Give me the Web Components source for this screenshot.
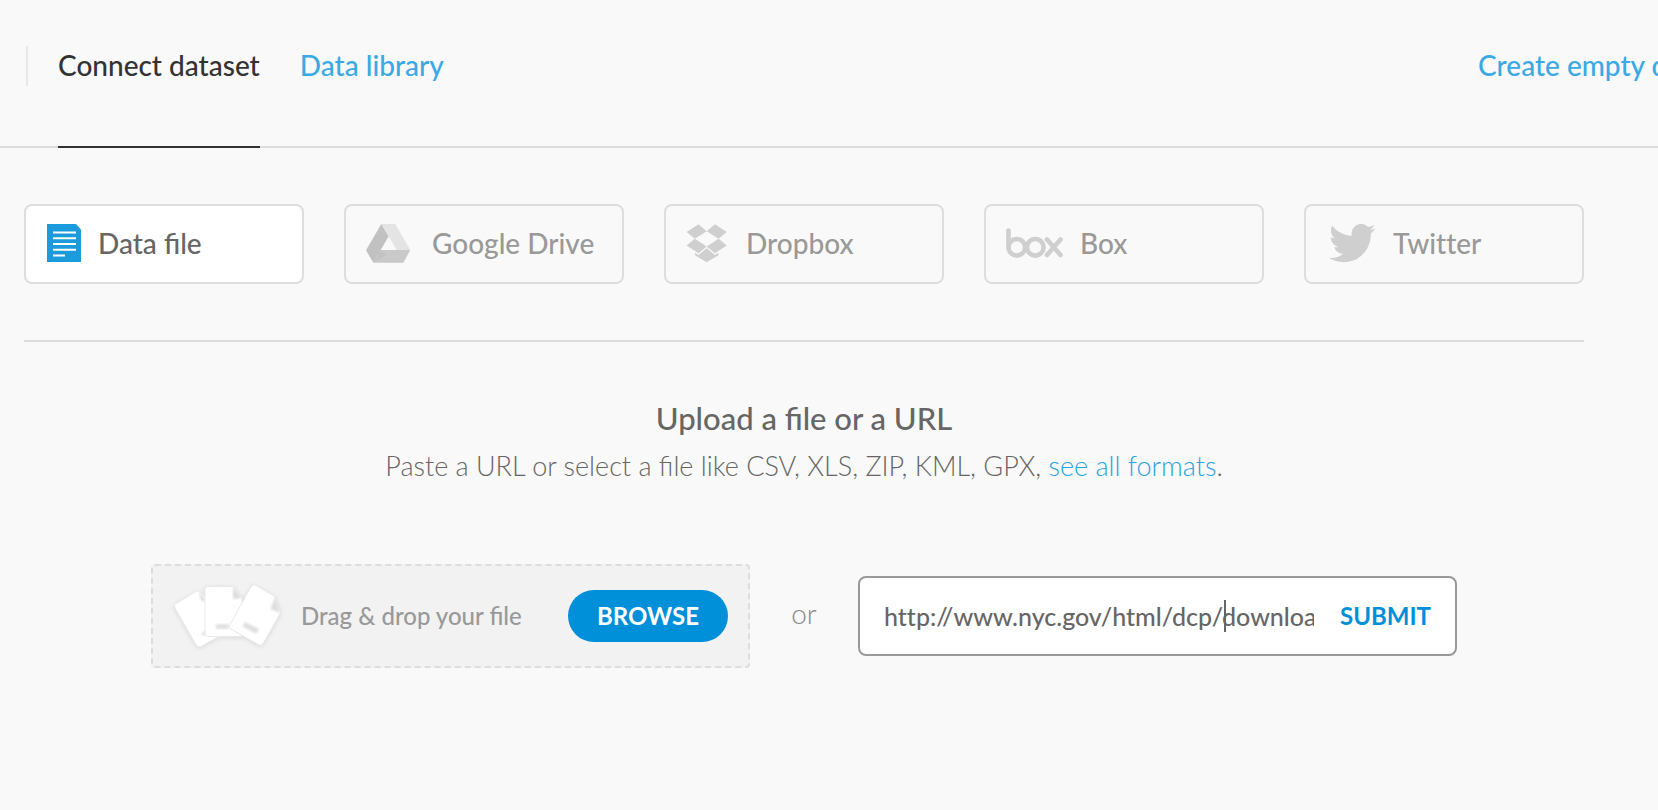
<!DOCTYPE html>
<html lang="en">
<head>
<meta charset="utf-8">
<title>Connect dataset</title>
<style>
  body { margin: 0; background: #f9f9f9; color: #666; font: 400 28px/40px Lato, "Liberation Sans", sans-serif; overflow-x: hidden; -webkit-font-smoothing: antialiased; }
</style>
</head>
<body>
<connect-page></connect-page>

<template id="connect-page">
  <style>
    :host { display: block; }
    main { padding: 56px 74px 56px 24px; }
    .sources { display: grid; grid-template-columns: repeat(5, 1fr); gap: 40px; padding-bottom: 56px; border-bottom: 2px solid #ddd; }
    h1 { margin: 56px 0 8px; font-size: 31px; line-height: 40px; font-weight: 500; text-align: center; }
    p { margin: 0; font-size: 27px; font-weight: 300; text-align: center; }
    p a { color: #2ba2e2; text-decoration: none; }
    .upload { display: flex; align-items: center; max-width: 1306px; margin: 78px auto 0; }
    file-drop, url-field { flex: 1 1 0; min-width: 0; }
    .or { flex: none; width: 108px; padding-bottom: 6px; text-align: center; font-weight: 300; color: #888; }
  </style>
  <page-header></page-header>
  <main>
    <div class="sources">
      <source-card selected>
        <svg slot="icon" width="35" height="40" viewBox="0 0 35 40"><path fill="#1b9bdb" d="M1 0H30L35 5.500V38H1z"/><path stroke="#fff" stroke-width="2" d="M7 8.500H30M7 14.300H30M7 20H30M7 25.800H30M7 31.500H19"/></svg>
        Data file
      </source-card>
      <source-card>
        <svg slot="icon" width="49" height="40" viewBox="0 0 49 40"><path fill="#c1c1c1" d="M15.300 0L22.700 12.300 7.300 38.800 0 26.300z"/><path fill="#e4e4e4" d="M15.300 0H29.300L44.300 26H30.700z"/><path fill="#c9c9c9" d="M14.700 26H44.300L37.300 38.800H7.300z"/><path fill="#bbb" d="M14.700 26L20 31 7.300 38.800z" opacity=".5"/></svg>
        Google Drive
      </source-card>
      <source-card>
        <svg slot="icon" width="43" height="40" viewBox="0 0 43 40"><path fill="#cfcfcf" d="M12.500 .2L20.700 7.300 8.800 14.700 .6 8zM28.900 .2L20.700 7.300 32.600 14.700 40.800 8zM8.800 14.700L20.700 22.500 12.500 29.200 .6 21.400zM32.600 14.700L20.700 22.500 28.900 29.200 40.800 21.400zM20.700 24.300L12.500 31 9 28.800V31.300L20.700 38.300 32.500 31.300V28.800L28.900 31z"/></svg>
        Dropbox
      </source-card>
      <source-card>
        <svg slot="icon" width="57" height="40" viewBox="0 0 57 40"><g fill="none" stroke="#cfcfcf" stroke-width="4.600" stroke-linecap="round"><path d="M2.500 6.500V23"/><circle cx="10.800" cy="23.300" r="8.300"/><circle cx="29.300" cy="23.300" r="8.300"/><path d="M41 15.500L54.500 31M54.500 15.500L41 31"/></g></svg>
        Box
      </source-card>
      <source-card>
        <svg slot="icon" width="50" height="40" viewBox="0 0 50 40"><path fill="#cfcfcf" transform="translate(3 -4.500) scale(1.940 1.960)" d="M23.953 4.570a10 10 0 01-2.825.775 4.958 4.958 0 002.163-2.723c-.951.555-2.005.959-3.127 1.184a4.920 4.920 0 00-8.384 4.482C7.690 8.095 4.067 6.130 1.640 3.162a4.822 4.822 0 00-.666 2.475c0 1.710.870 3.213 2.188 4.096a4.904 4.904 0 01-2.228-.616v.060a4.923 4.923 0 003.946 4.827 4.996 4.996 0 01-2.212.085 4.936 4.936 0 004.604 3.417 9.867 9.867 0 01-6.102 2.105c-.390 0-.779-.023-1.170-.067a13.995 13.995 0 007.557 2.209c9.053 0 13.998-7.496 13.998-13.985 0-.210 0-.420-.015-.630A9.935 9.935 0 0024 4.590z"/></svg>
        Twitter
      </source-card>
    </div>
    <h1>Upload a file or a URL</h1>
    <p>Paste a URL or select a file like CSV, XLS, ZIP, KML, GPX, <a href="#formats">see all formats</a>.</p>
    <div class="upload">
      <file-drop>Drag &amp; drop your file</file-drop>
      <span class="or">or</span>
      <url-field></url-field>
    </div>
  </main>
</template>

<template id="page-header">
  <style>
    :host { display: block; box-shadow: inset 0 -2px #ddd; }
    header { display: flex; padding-left: 26px; }
    nav { display: flex; flex: 1; gap: 40px; }
    .divider { width: 2px; height: 40px; margin: 46px 30px 0 0; background: #e8e8e8; }
    .create { flex: none; width: 180px; overflow: hidden; padding-top: 45px; color: #3aa9e4; font-weight: 500; text-decoration: none; white-space: nowrap; }
  </style>
  <header>
    <div class="divider"></div>
    <nav>
      <nav-tab href="#connect" current>Connect dataset</nav-tab>
      <nav-tab href="#library">Data library</nav-tab>
    </nav>
    <a class="create" href="#new">Create empty dataset</a>
  </header>
</template>

<template id="nav-tab">
  <style>
    :host { display: block; }
    a { display: block; padding: 45px 0 61px; border-bottom: 2px solid transparent; color: #3aa9e4; font-weight: 500; text-decoration: none; white-space: nowrap; }
    :host([current]) a { color: #333; border-color: #333; }
  </style>
  <a><slot></slot></a>
</template>

<template id="source-card">
  <style>
    :host { display: block; min-width: 0; }
    button { display: flex; align-items: center; gap: 17px; box-sizing: border-box; width: 100%; height: 80px; margin: 0; padding: 0 20px; border: 2px solid #ddd; border-radius: 8px; background: none; color: #999; font: inherit; font-weight: 500; white-space: nowrap; }
    :host([selected]) button { background: #fff; color: #666; }
    :host(:not([selected])) button { font-variant-ligatures: none; }
    .label { padding-bottom: 2px; }
    ::slotted(svg) { flex: none; }
  </style>
  <button type="button"><slot name="icon"></slot><span class="label"><slot></slot></span></button>
</template>

<template id="file-drop">
  <style>
    :host { display: block; }
    .zone { display: flex; align-items: center; gap: 16px; box-sizing: border-box; height: 104px; padding: 0 20px; border: 2px dashed #ddd; border-radius: 4px; background: #f2f2f2; color: #999; font-size: 24px; font-weight: 500; }
    svg { flex: none; filter: drop-shadow(0 1px 2px rgba(0, 0, 0, .1)); }
    .text { flex: 1; white-space: nowrap; }
    button { flex: none; width: 160px; height: 52px; padding: 0; border: 0; border-radius: 26px; background: #0090da; color: #fff; font: inherit; font-weight: 700; }
  </style>
  <div class="zone">
    <svg width="112" height="72" viewBox="0 0 112 72" aria-hidden="true">
      <defs><filter id="soft"><feGaussianBlur stdDeviation=".8"/></filter></defs>
      <g fill="#fff" stroke="#e9e9e9" stroke-width="1" stroke-linejoin="round">
        <path d="M23 11.800L3 23.600Q.4 25.200 2 28L23.500 65.500Q25.200 68 28 66.500L52 53 36 20 26.500 11.500Q25 10.600 23 11.800z"/>
        <path d="M26 11L32 19V22L28 20z" fill="#ddd" filter="url(#soft)"/>
        <path d="M28 53l6-2v3l-4 2z" fill="#e0e0e0" stroke="none" filter="url(#soft)"/>
        <path d="M35 6.500H60L69 17V56.500H35Q32 56.500 32 53.500V9.500Q32 6.500 35 6.500z"/>
        <path d="M60 7V19L69 18z" fill="#ddd" stroke="none" filter="url(#soft)"/>
        <path d="M43 44H56V49H43z" fill="#e2e2e2" stroke="none" filter="url(#soft)"/>
        <path d="M82.500 5.200L101.500 16.200 107.500 33 90 63.500Q88.500 66.200 85.500 64.700L58 49Q55.200 47.400 57 44.500L78 6.800Q79.700 3.800 82.500 5.200z"/>
        <path d="M102 17L97.500 29 107 33z" fill="#ddd" stroke="none" filter="url(#soft)"/>
        <path d="M72 42L86 49 83.500 54 69.500 46.500z" fill="#e0e0e0" stroke="none" filter="url(#soft)"/>
      </g>
    </svg>
    <span class="text"><slot></slot></span>
    <button type="button">BROWSE</button>
  </div>
</template>

<template id="url-field">
  <style>
    :host { display: block; }
    form { display: flex; align-items: center; gap: 26px; box-sizing: border-box; height: 80px; margin: 0; padding: 0 24px; border: 2px solid #999; border-radius: 8px; background: #fff; font-size: 24px; }
    .entry { position: relative; flex: 1; min-width: 0; }
    input { display: block; box-sizing: border-box; width: 100%; height: 40px; margin: 0; padding: 0; border: 0; outline: 0; background: none; color: #666; font: inherit; font-size: 25px; font-weight: 500; font-variant-ligatures: none; }
    .caret { position: absolute; left: 340px; top: 4px; width: 2px; height: 32px; background: #666; }
    button { flex: none; padding: 0; border: 0; background: none; color: #0090da; font: inherit; font-weight: 700; }
  </style>
  <form>
    <div class="entry">
      <input type="text" aria-label="File URL" value="http://www.nyc.gov/html/dcp/download" spellcheck="false">
      <span class="caret"></span>
    </div>
    <button type="button">SUBMIT</button>
  </form>
</template>

<script>
  class TemplateElement extends HTMLElement {
    connectedCallback() {
      if (this.shadowRoot) return;
      const template = document.getElementById(this.localName);
      this.attachShadow({ mode: 'open' }).append(template.content.cloneNode(true));
      this.ready();
    }
    ready() {}
  }
  class NavTab extends TemplateElement {
    ready() {
      const link = this.shadowRoot.querySelector('a');
      link.href = this.getAttribute('href');
      if (this.hasAttribute('current')) link.setAttribute('aria-current', 'page');
    }
  }
  class SourceCard extends TemplateElement {
    ready() {
      this.shadowRoot.querySelector('button').setAttribute('aria-pressed', String(this.hasAttribute('selected')));
    }
  }
  customElements.define('nav-tab', NavTab);
  customElements.define('source-card', SourceCard);
  customElements.define('file-drop', class extends TemplateElement {});
  customElements.define('url-field', class extends TemplateElement {});
  customElements.define('page-header', class extends TemplateElement {});
  customElements.define('connect-page', class extends TemplateElement {});
</script>
</body>
</html>
